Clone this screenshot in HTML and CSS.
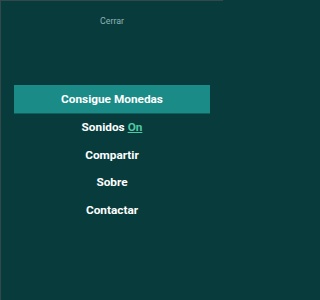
FILE: index.html
```html
<!DOCTYPE html>
<html>
<head>
<meta charset="utf-8">
<link rel="stylesheet" href="styles.css">
</head>
<body>
<div class="screen">
  <div class="close">Cerrar</div>
  <nav class="menu">
    <div class="item primary">Consigue Monedas</div>
    <div class="item">Sonidos <span class="on">On</span></div>
    <div class="item">Compartir</div>
    <div class="item">Sobre</div>
    <div class="item">Contactar</div>
  </nav>
</div>
</body>
</html>
```
FILE: styles.css
```css
html, body {
  margin: 0;
  padding: 0;
  background: #083c3c;
}
.screen {
  box-sizing: border-box;
  width: 223px;
  height: 300px;
  background: #083c3c;
  border-top: 1px solid #34474a;
  border-left: 1px solid #34474a;
  font-family: Roboto, "Liberation Sans", sans-serif;
  display: flex;
  flex-direction: column;
  align-items: center;
}
.close {
  margin-top: 13px;
  font-size: 8.8px;
  line-height: 14px;
  color: #8fb3b3;
}
.menu {
  margin-top: 57px;
  align-self: stretch;
  padding: 0 13px 0 13px;
  display: flex;
  flex-direction: column;
}
.item {
  height: 27.5px;
  display: flex;
  align-items: center;
  justify-content: center;
  color: #ffffff;
  font-weight: bold;
  font-size: 11.8px;
}
.item.primary {
  height: 28px;
  background: #1b8b88;
  box-shadow: 0 1px 0 #0f5f5d;
  margin-bottom: 0.5px;
}
.on {
  color: #4ec9a4;
  text-decoration: underline;
  margin-left: 3px;
}
```
